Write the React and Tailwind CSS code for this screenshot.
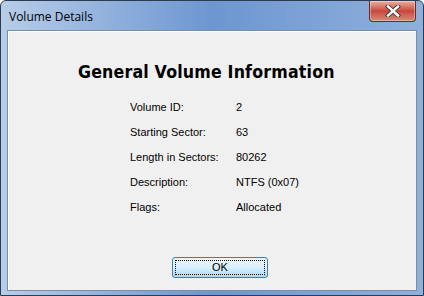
import React from "react";

const rows = [
  ["Volume ID:", "2"],
  ["Starting Sector:", "63"],
  ["Length in Sectors:", "80262"],
  ["Description:", "NTFS (0x07)"],
  ["Flags:", "Allocated"],
];

const CloseButton = () => (
  <div className="w-[47px] h-[21px] rounded-b-[4px] border border-t-0 border-[#6b2a22] bg-gradient-to-b from-[#e8b0a2] via-[#c8473a] to-[#d68a7c] flex items-center justify-center shadow-[inset_0_0_0_1px_rgba(255,255,255,0.35)]">
    <svg width="16" height="12" viewBox="0 0 16 12">
      <path d="M3 1.5 L13 10.5 M13 1.5 L3 10.5" stroke="#3a3a3a" strokeWidth="4.2" strokeLinecap="square" />
      <path d="M3 1.5 L13 10.5 M13 1.5 L3 10.5" stroke="#ffffff" strokeWidth="2.4" strokeLinecap="square" />
    </svg>
  </div>
);

export default function App() {
  return (
    <div className="w-[424px] h-[296px] flex flex-col border border-[#2b3b52] rounded-t-[6px] bg-gradient-to-r from-[#b7cde8] via-[#6d96d0] to-[#8fb0dc] font-['Liberation_Sans',sans-serif] overflow-hidden">
      <div className="h-[29px] flex items-start justify-between pl-[8px] pr-[7px]">
        <span className="mt-[7px] text-[12px] text-black font-['Open_Sans',sans-serif]">Volume Details</span>
        <CloseButton />
      </div>
      <div className="flex-1 mx-[6px] mb-[4px] border border-[#7d8da6] bg-[#f0f0f0] flex flex-col shadow-[inset_1px_1px_0_#ffffff]">
        <h1 className="mt-[30px] ml-[70px] self-start origin-left text-[18px] font-bold text-black leading-[22px] tracking-[0.2px] font-['DejaVu_Sans',sans-serif] scale-x-[0.88] whitespace-nowrap">
          General Volume Information
        </h1>
        <div className="mt-[17px] ml-[122px] flex flex-col gap-[11px] text-[11px] text-black">
          {rows.map(([k, v]) => (
            <div key={k} className="flex h-[14px] items-center">
              <span className="w-[106px]">{k}</span>
              <span>{v}</span>
            </div>
          ))}
        </div>
        <div className="flex-1" />
        <button className="mb-[12px] ml-[164px] w-[96px] h-[21px] rounded-[3px] border border-[#3c7fb1] bg-gradient-to-b from-[#eaf6fd] via-[#d9f0fc] to-[#a7d9f5] p-[2px]">
          <div className="w-full h-full border border-dotted border-black flex items-center justify-center text-[11px] text-black">
            OK
          </div>
        </button>
      </div>
    </div>
  );
}
